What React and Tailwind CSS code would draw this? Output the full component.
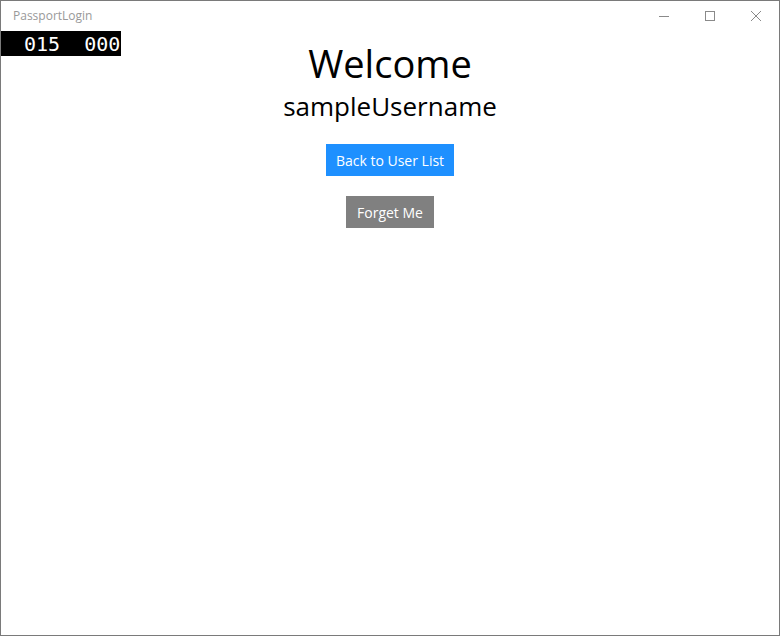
import React from 'react';

// Title bar caption buttons
function Caption() {
  return (
    <div className="flex h-full">
      <div className="w-[46px] flex items-center justify-center">
        <svg width="10" height="10" viewBox="0 0 10 10">
          <path d="M0 5.5H10" stroke="#8a8a8a" strokeWidth="1" />
        </svg>
      </div>
      <div className="w-[46px] flex items-center justify-center">
        <svg width="10" height="10" viewBox="0 0 10 10">
          <rect x="0.5" y="0.5" width="9" height="9" fill="none" stroke="#8a8a8a" strokeWidth="1" />
        </svg>
      </div>
      <div className="w-[46px] flex items-center justify-center">
        <svg width="10" height="10" viewBox="0 0 10 10">
          <path d="M0 0L10 10M10 0L0 10" stroke="#8a8a8a" strokeWidth="1" />
        </svg>
      </div>
    </div>
  );
}

export default function App() {
  return (
    <div className="w-[780px] h-[636px] border border-[#7a7a7a] bg-white flex flex-col overflow-hidden" style={{ fontFamily: '"Open Sans", "Noto Sans", sans-serif' }}>
      <div className="h-[30px] flex items-center justify-between shrink-0">
        <span className="pl-3 text-[12px] text-[#999999]">PassportLogin</span>
        <div className="h-full flex">
          <Caption />
        </div>
      </div>

      <div className="relative flex-1 flex flex-col items-center">
        {/* frame rate counter */}
        <div className="absolute left-0 top-0 w-[120px] h-[25px] bg-black flex items-center text-white text-[20px] leading-none" style={{ fontFamily: '"DejaVu Sans Mono", monospace' }}>
          <span className="pl-[23px]">015</span>
          <span className="pl-[24px]">000</span>
        </div>

        <h1 className="mt-[7px] text-[38px] leading-[51px] text-black">Welcome</h1>
        <p className="text-[26px] leading-[34px] text-black">sampleUsername</p>

        <button className="mt-[21px] h-[32px] px-[10px] bg-[#1e90ff] text-white text-[14px]">Back to User List</button>
        <button className="mt-[20px] h-[32px] px-[11px] bg-[#808080] text-white text-[14px]">Forget Me</button>
      </div>
    </div>
  );
}
